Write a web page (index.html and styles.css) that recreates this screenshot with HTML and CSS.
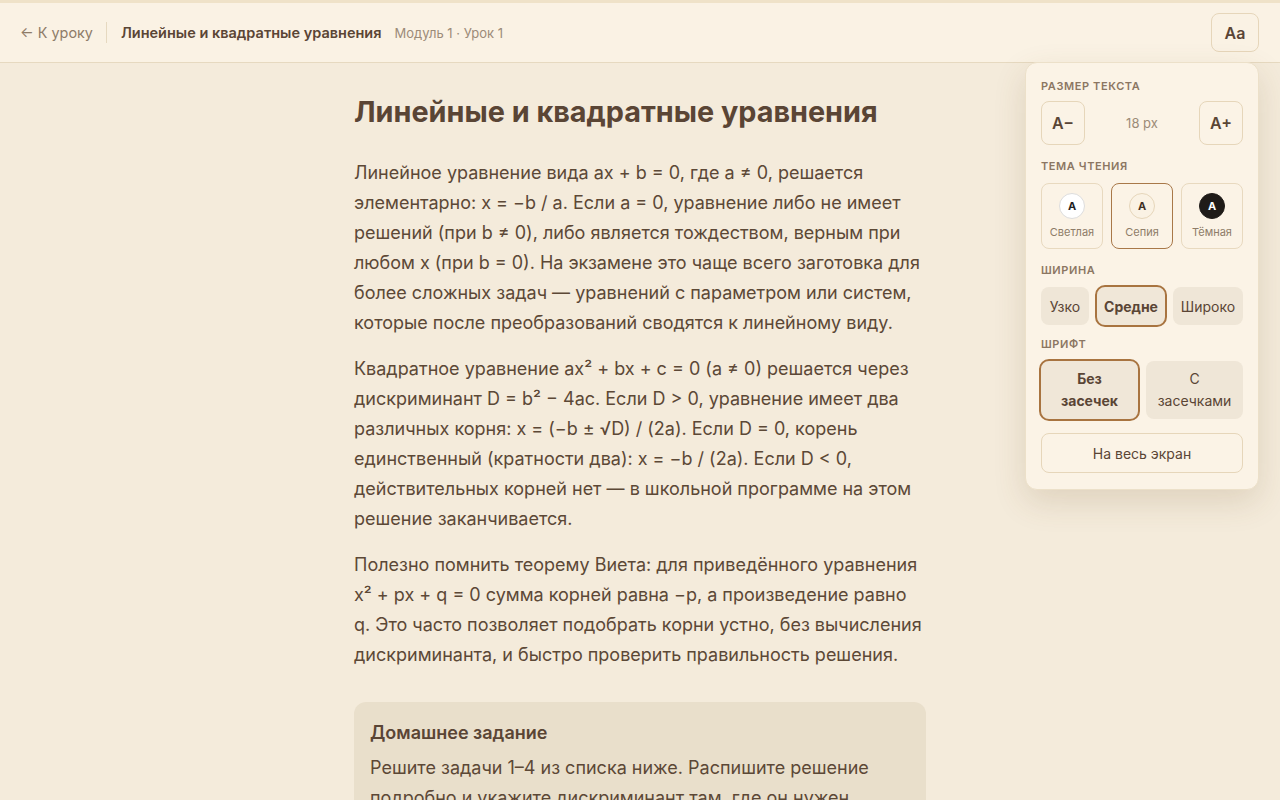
FILE: index.html
```html
<!DOCTYPE html>
<html lang="ru">
<head>
  <meta charset="UTF-8">
  <title>Линейные и квадратные уравнения</title>
  <meta name="viewport" content="width=device-width, initial-scale=1.0">
  <link rel="stylesheet" href="styles.css">
</head>
<body>
  <header class="topbar">
    <div class="crumbs">
      <a class="back" href="#">← К уроку</a>
      <span class="sep"></span>
      <span class="lesson-title">Линейные и квадратные уравнения</span>
      <span class="meta">Модуль 1 · Урок 1</span>
    </div>
    <button class="aa">Aa</button>
  </header>

  <main class="reader">
    <h1>Линейные и квадратные уравнения</h1>
    <p>Линейное уравнение вида ax + b = 0, где a ≠ 0, решается элементарно: x = −b / a. Если a = 0, уравнение либо не имеет решений (при b ≠ 0), либо является тождеством, верным при любом x (при b = 0). На экзамене это чаще всего заготовка для более сложных задач — уравнений с параметром или систем, которые после преобразований сводятся к линейному виду.</p>
    <p>Квадратное уравнение ax² + bx + c = 0 (a ≠ 0) решается через дискриминант D = b² − 4ac. Если D &gt; 0, уравнение имеет два различных корня: x = (−b ± √D) / (2a). Если D = 0, корень единственный (кратности два): x = −b / (2a). Если D &lt; 0, действительных корней нет — в школьной программе на этом решение заканчивается.</p>
    <p>Полезно помнить теорему Виета: для приведённого уравнения x² + px + q = 0 сумма корней равна −p, а произведение равно q. Это часто позволяет подобрать корни устно, без вычисления дискриминанта, и быстро проверить правильность решения.</p>
    <div class="homework">
      <h3>Домашнее задание</h3>
      <p>Решите задачи 1–4 из списка ниже. Распишите решение подробно и укажите дискриминант там, где он нужен.</p>
    </div>
  </main>

  <!-- reading settings popover -->
  <div class="panel">
    <div class="label">Размер текста</div>
    <div class="size-row">
      <button class="size-btn">A−</button>
      <span class="size-val">18 px</span>
      <button class="size-btn">A+</button>
    </div>

    <div class="label">Тема чтения</div>
    <div class="themes">
      <button class="theme"><span class="dot light">A</span>Светлая</button>
      <button class="theme active"><span class="dot sepia">A</span>Сепия</button>
      <button class="theme"><span class="dot dark">A</span>Тёмная</button>
    </div>

    <div class="label">Ширина</div>
    <div class="widths">
      <button class="chip w-narrow">Узко</button>
      <button class="chip w-mid active">Средне</button>
      <button class="chip w-wide">Широко</button>
    </div>

    <div class="label">Шрифт</div>
    <div class="fonts">
      <button class="chip active">Без<br>засечек</button>
      <button class="chip">С<br>засечками</button>
    </div>

    <button class="fullscreen">На весь экран</button>
  </div>
</body>
</html>
```

FILE: styles.css
```css
body { margin: 0; font-family: Inter, "Noto Sans", sans-serif; background: #f4ebdb; color: #5c4836; }
button { font-family: inherit; color: inherit; cursor: pointer; }

.topbar { display: flex; align-items: center; justify-content: space-between; height: 59px; padding: 0 21px 0 20px; background: #faf2e4; border-top: 3px solid #efe2c8; border-bottom: 1px solid #e6d9c0; }
.crumbs { display: flex; align-items: center; }
.back { color: #8e7c68; text-decoration: none; font-size: 14.4px; }
.sep { width: 1px; height: 21px; background: #e6d9c0; margin: 0 14px 0 13px; }
.lesson-title { font-size: 14.5px; font-weight: 600; color: #5a4535; }
.meta { font-size: 13px; color: #9c8b78; margin-left: 13px; }
.aa { width: 48px; height: 39px; border: 1px solid #e6d6ba; border-radius: 8px; background: #faf2e4; font-size: 16px; font-weight: 600; color: #5a4535; }

.reader { width: 572px; margin: 0 auto; padding-top: 31px; }
.reader h1 { font-size: 28.8px; line-height: 36px; font-weight: 700; margin: 0 0 28px; color: #5a4535; }
.reader p { font-size: 18px; line-height: 30px; margin: 0 0 16px; }
.homework { background: #e9dfcb; border-radius: 12px; padding: 18px 16px 16px; margin-top: 32px; }
.homework h3 { font-size: 18px; line-height: 26px; margin: 0 0 7px; font-weight: 600; color: #5a4535; }
.homework p { margin: 0; }

.panel { position: absolute; top: 62px; right: 21px; width: 202px; padding: 16px 15px 16px; background: #fbf3e6; border: 1px solid #ece0c9; border-radius: 12px; box-shadow: 0 12px 32px rgba(110, 80, 40, 0.16); }
.label { font-size: 11px; line-height: 14px; font-weight: 600; letter-spacing: 0.6px; text-transform: uppercase; color: #8b7662; margin: 0 0 10px; }
.size-row { display: flex; align-items: center; justify-content: space-between; height: 44px; margin-top: -2px; margin-bottom: 14px; }
.size-btn { width: 44px; height: 44px; border: 1px solid #e6d6ba; border-radius: 8px; background: #fbf3e6; font-size: 16px; font-weight: 600; color: #5a4535; }
.size-val { font-size: 13px; color: #9c8b78; }

.themes { display: flex; gap: 8px; margin-bottom: 14px; }
.theme { flex: 1; height: 66px; border: 1px solid #e8d9bf; border-radius: 8px; background: #fbf3e6; display: flex; flex-direction: column; align-items: center; padding: 9px 0 0; font-size: 11px; color: #8e7c68; }
.theme.active { border-color: #a87849; }
.dot { width: 24px; height: 24px; border-radius: 50%; display: flex; align-items: center; justify-content: center; font-size: 11px; font-weight: 700; margin-bottom: 6px; }
.dot.light { background: #fff; border: 1px solid #ddd; color: #222; }
.dot.sepia { background: #faf2e4; border: 1px solid #e6d6ba; color: #3f3024; }
.dot.dark { background: #1f1b18; border: 1px solid #1f1b18; color: #fff; }

.widths { display: flex; gap: 8px; margin-bottom: 12px; }
.chip { height: 38px; border: none; border-radius: 8px; background: #efe6d7; font-size: 14px; color: #5a4535; padding: 0; }
.chip.active { outline: 2px solid #a87440; font-weight: 700; background: #f0e7d8; }
.w-narrow { width: 48px; }
.w-mid { width: 68px; }
.w-wide { width: 70px; }

.fonts { display: flex; gap: 8px; margin-bottom: 14px; }
.fonts .chip { flex: 1; height: 58px; line-height: 22px; }

.fullscreen { width: 100%; height: 40px; border: 1px solid #e6d6ba; border-radius: 8px; background: #fbf3e6; font-size: 14px; color: #5a4535; }
```
